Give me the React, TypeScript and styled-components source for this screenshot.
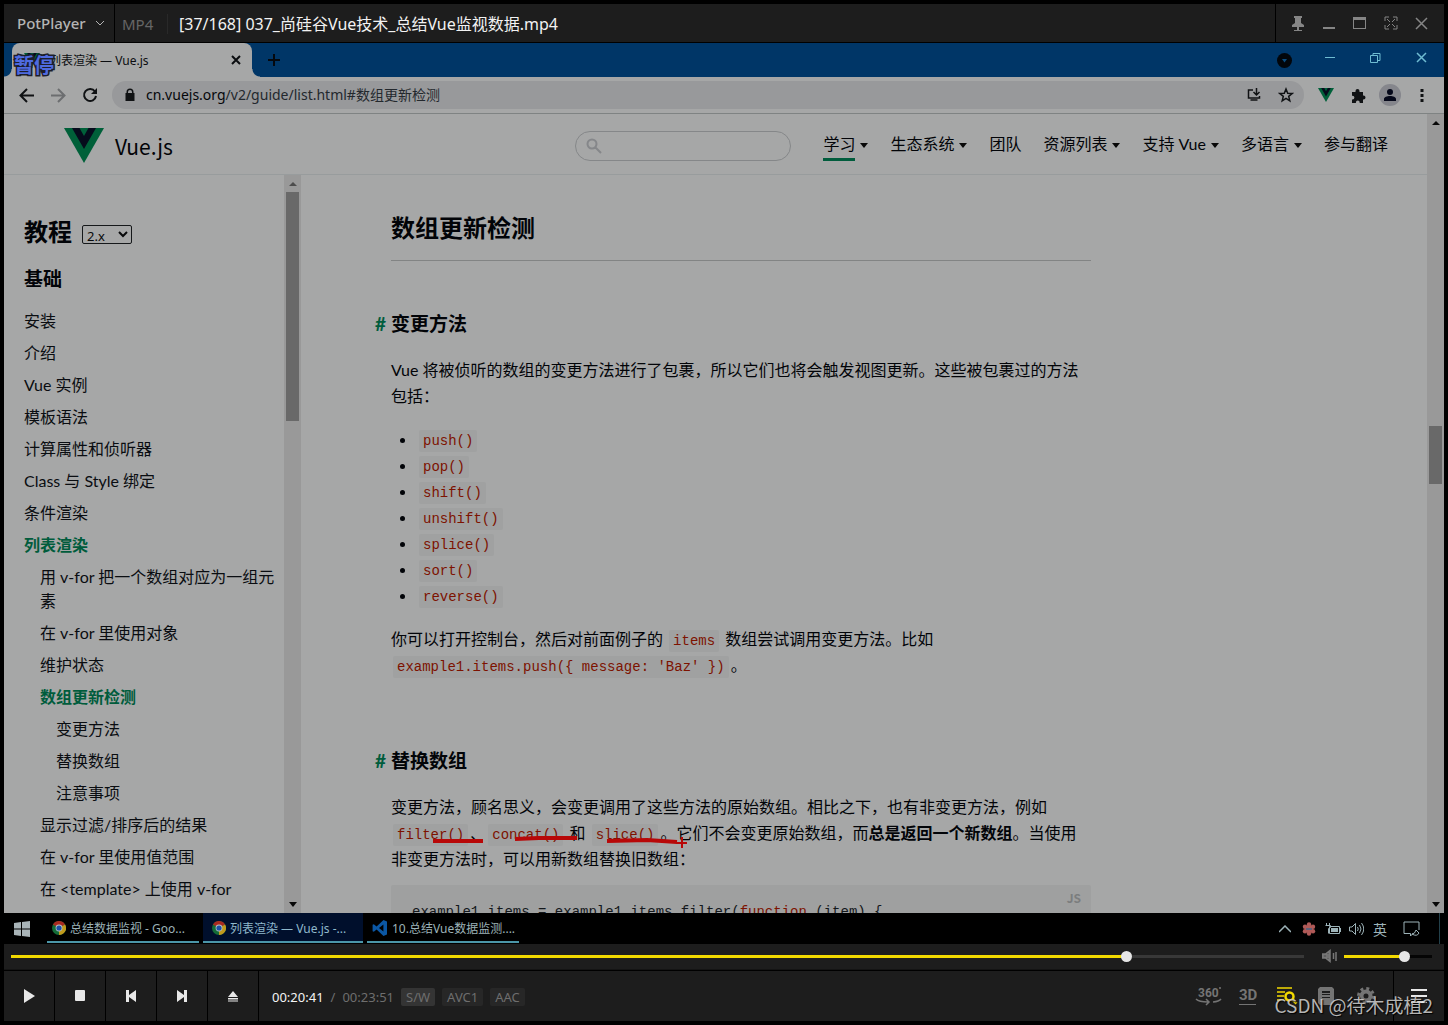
import React from "react";
import styled, { createGlobalStyle, css } from "styled-components";

const ui = `"Noto Sans", "Noto Sans CJK SC", sans-serif`;
const doc = `Lato, "Noto Sans CJK SC", sans-serif`;
const cjk = `"Noto Sans CJK SC", "Noto Sans", sans-serif`;
const mono = `"Liberation Mono", "Noto Sans CJK SC", monospace`;

const c = {
  panel: "#1d1d1d",
  page: "#a6a7a7",
  ink: "#020408",
  green: "#005c3c",
  red: "#7d1200",
  track: "#999999",
  thumb: "#696969",
  cyan: "#6fbcd2",
  yellow: "#f2d900",
};

const GlobalStyle = createGlobalStyle`
  * { box-sizing: border-box; }
  body { margin: 0; background: #000; }
  button { border: 0; padding: 0; background: none; color: inherit; font: inherit; }
  a { color: inherit; text-decoration: none; }
  svg { display: block; flex: none; }
`;

const Player = styled.div`
  height: 100vh;
  padding: 4px;
  display: flex;
  flex-direction: column;
  background: #000;
  font-family: ${ui};
`;

/* ---------- player title bar ---------- */

const TitleBar = styled.header`
  height: 38px;
  flex: none;
  display: flex;
  background: ${c.panel};
  margin-bottom: 1px;
`;

const Brand = styled.button`
  width: 111px;
  padding-left: 13px;
  display: flex;
  align-items: center;
  gap: 9px;
  border-right: 1px solid #000;
  color: #b4b4b4;
  font-size: 15px;
  font-weight: 500;
`;

const Format = styled.span`
  margin: 10px 0 8px 7px;
  width: 46px;
  border-right: 1px solid #292929;
  color: #666;
  font-size: 15px;
  line-height: 20px;
`;

const FileName = styled.span`
  flex: 1;
  padding: 2px 0 0 11px;
  align-self: center;
  color: #f2f2f2;
  font-size: 16px;
  line-height: 24px;
`;

const WindowButtons = styled.div`
  display: flex;
  align-items: center;
  padding: 0 7px 0 6px;
  border-left: 1px solid #000;
  color: #858585;
`;

const IconButton = styled.button<{ $w: number }>`
  width: ${(p) => p.$w}px;
  height: 100%;
  display: flex;
  align-items: center;
  justify-content: center;
`;

/* ---------- browser ---------- */

const Video = styled.main`
  flex: 1;
  min-height: 0;
  display: flex;
  flex-direction: column;
  position: relative;
`;

const Paused = styled.div`
  position: absolute;
  left: 10px;
  top: 8px;
  z-index: 2;
  color: #4f6be0;
  font: bold 20px/28px ${cjk};
  -webkit-text-stroke: 3px #1c1e2b;
  paint-order: stroke fill;
`;

const TabStrip = styled.div`
  height: 34px;
  flex: none;
  display: flex;
  background: #003667;
`;

const Tab = styled.div`
  margin-left: 8px;
  width: 240px;
  padding: 0 10px 0 12px;
  display: flex;
  align-items: center;
  gap: 9px;
  position: relative;
  border-radius: 8px 8px 0 0;
  background: ${c.page};
  color: #0b0d10;
  font-size: 12px;

  &::before,
  &::after {
    content: "";
    position: absolute;
    bottom: 0;
    width: 8px;
    height: 8px;
  }
  &::before {
    left: -8px;
    background: radial-gradient(circle at 0 0, transparent 7px, ${c.page} 8px);
  }
  &::after {
    right: -8px;
    background: radial-gradient(circle at 100% 0, transparent 7px, ${c.page} 8px);
  }
`;

const TabTitle = styled.span`
  flex: 1;
`;

const StripButtons = styled.div`
  margin-left: auto;
  display: flex;
  color: ${c.cyan};
`;

const Toolbar = styled.div`
  height: 37px;
  flex: none;
  padding: 0 6px;
  display: flex;
  align-items: center;
  background: ${c.page};
  border-bottom: 1px solid #7f8383;
  color: #101214;
`;

const Omnibox = styled.div`
  flex: 1;
  height: 28px;
  margin: 0 6px;
  padding: 0 7px 0 12px;
  display: flex;
  align-items: center;
  gap: 10px;
  border-radius: 14px;
  background: #98999b;
`;

const Url = styled.span`
  flex: 1;
  color: #23282d;
  font-size: 14px;
  line-height: 20px;

  b {
    color: #05070a;
    font-weight: 400;
  }
`;

const Avatar = styled.span`
  width: 22px;
  height: 22px;
  display: grid;
  place-items: center;
  border-radius: 50%;
  background: #85868c;
  color: #05081a;
`;

/* ---------- page ---------- */

const Viewport = styled.div`
  flex: 1;
  min-height: 0;
  display: flex;
  background: ${c.page};
  color: ${c.ink};
  font: 16px/24px ${doc};
`;

const Page = styled.div`
  flex: 1;
  min-width: 0;
  display: flex;
  flex-direction: column;
`;

const SiteHeader = styled.header`
  height: 61px;
  flex: none;
  padding: 3px 39px 0 60px;
  display: flex;
  align-items: center;
  border-bottom: 1px solid #989c9d;
`;

const Logo = styled.a`
  margin-right: auto;
  display: flex;
  align-items: center;
  gap: 11px;
  font: 21px/32px ${cjk};
`;

const Search = styled.label`
  width: 216px;
  height: 30px;
  margin-right: 32px;
  padding: 0 10px;
  display: flex;
  align-items: center;
  border: 1px solid #858789;
  border-radius: 15px;
  color: #85878a;

  input {
    flex: 1;
    min-width: 0;
    border: 0;
    outline: 0;
    background: none;
    font: inherit;
  }
`;

const SiteNav = styled.nav`
  display: flex;
  gap: 22px;
`;

const NavLink = styled.a<{ $current?: boolean }>`
  display: flex;
  align-items: center;
  gap: 5px;

  span {
    padding: 2px 0;
    border-bottom: 3px solid ${(p) => (p.$current ? c.green : "transparent")};
  }
`;

const Caret = styled.i<{ $up?: boolean; $dim?: boolean }>`
  width: 0;
  height: 0;
  border: 4px solid transparent;
  ${(p) =>
    p.$up
      ? css`border-top-width: 0; border-bottom-color: ${p.$dim ? "#4d4d4d" : "#080808"};`
      : css`border-bottom-width: 0; border-top: 5px solid #080808;`}
`;

const Body = styled.div`
  flex: 1;
  min-height: 0;
  display: flex;
`;

const Sidebar = styled.aside`
  width: 297px;
  flex: none;
  display: flex;
`;

const Menu = styled.nav`
  flex: 1;
  min-width: 0;
  padding: 39px 4px 0 20px;
  overflow: hidden;
`;

const MenuTitle = styled.h2`
  margin: 0 0 14px;
  display: flex;
  align-items: center;
  gap: 10px;
  font-size: 24px;
  line-height: 36px;
`;

const Version = styled.select`
  width: 50px;
  height: 19px;
  margin-top: 4px;
  padding: 0;
  border: 1px solid #15181a;
  border-radius: 2px;
  background: transparent;
  color: #08090a;
  font: 13px ${ui};
`;

const MenuGroup = styled.h3`
  margin: 0 0 15px;
  font-size: 19px;
  line-height: 30px;
`;

const MenuList = styled.ul`
  margin: 0;
  padding: 0;
  list-style: none;

  & & {
    padding-left: 16px;
  }
`;

const MenuLink = styled.a<{ $active?: boolean }>`
  display: block;
  margin-bottom: 8px;
  color: ${(p) => (p.$active ? c.green : "#0a0d11")};
  font-weight: ${(p) => (p.$active ? 700 : 400)};
`;

const Scroll = styled.div`
  width: 17px;
  flex: none;
  display: flex;
  flex-direction: column;
  align-items: stretch;
  background: ${c.track};
`;

const ScrollArrow = styled.button`
  height: 17px;
  flex: none;
  display: grid;
  place-items: center;
`;

const ScrollPart = styled.div<{ $grow: number; $thumb?: boolean }>`
  flex: ${(p) => p.$grow} 0 0;
  margin: 0 2px;
  background: ${(p) => (p.$thumb ? c.thumb : "transparent")};
`;

const ArticlePane = styled.div`
  flex: 1;
  min-width: 0;
  overflow: hidden;
  padding: 35px 40px 0 90px;
`;

const Article = styled.article`
  max-width: 700px;
`;

const H2 = styled.h2`
  margin: 0 0 51px;
  padding-bottom: 14px;
  border-bottom: 1px solid #828484;
  font-size: 24px;
  line-height: 36px;
`;

const H3 = styled.h3`
  margin: 0 0 21px -16px;
  display: flex;
  font-size: 19px;
  line-height: 24px;

  a {
    width: 16px;
    color: ${c.green};
  }
`;

const P = styled.p<{ $after: number }>`
  margin: 0 0 ${(p) => p.$after}px;
  position: relative;
  line-height: 26px;
`;

const Methods = styled.ul`
  margin: 0 0 18px;
  padding-left: 26px;
  line-height: 26px;
`;

const Code = styled.code`
  margin: 0 2px;
  padding: 3px 4px;
  border-radius: 2px;
  background: #a0a1a1;
  color: ${c.red};
  font: 14px ${mono};
  white-space: nowrap;
`;

const Marks = styled.svg`
  position: absolute;
  left: 0;
  top: 0;
  overflow: visible;
`;

const Block = styled.pre`
  margin: 0;
  padding: 14px 10px 60px 21px;
  position: relative;
  border-radius: 2px;
  background: #9fa0a0;
  color: #14181c;
  font: 14px/26px ${mono};

  em {
    color: ${c.red};
    font-style: normal;
  }
`;

const Lang = styled.span`
  position: absolute;
  right: 10px;
  top: 4px;
  color: #7b7d7e;
  font: bold 12px/18px ${cjk};
`;

/* ---------- taskbar ---------- */

const Taskbar = styled.div`
  height: 31px;
  flex: none;
  display: flex;
  align-items: stretch;
  gap: 4px;
  background: #000;
  color: #9db3b8;
  font-size: 12px;
`;

const Start = styled.button`
  width: 39px;
  padding-left: 10px;
`;

const Task = styled.button<{ $active?: boolean }>`
  width: ${(p) => (p.$active ? 160 : 152)}px;
  margin-bottom: 1px;
  padding: 2px 0 0 ${(p) => (p.$active ? 9 : 5)}px;
  display: flex;
  align-items: center;
  gap: 4px;
  border-bottom: 2px solid #4b96a8;
  background: ${(p) => (p.$active ? "#000f2c" : "transparent")};
  color: ${(p) => (p.$active ? "#8fb9cc" : "inherit")};
  white-space: nowrap;
`;

const Tray = styled.div`
  margin-left: auto;
  padding-right: 5px;
  display: flex;
  align-items: center;
`;

const TrayText = styled(IconButton)`
  font-size: 14px;
`;

const ShowDesktop = styled.button`
  width: 5px;
  border-left: 1px solid #23404a;
`;

/* ---------- player controls ---------- */

const SeekBar = styled.div`
  height: 26px;
  flex: none;
  padding: 0 12px 1px 7px;
  display: flex;
  align-items: center;
  background: ${c.panel};
  border-bottom: 1px solid #141414;
`;

const Slider = styled.input.attrs({ type: "range" })<{ $fill: number; $rest: string }>`
  appearance: none;
  height: 12px;
  margin: 0;
  background: linear-gradient(90deg, ${c.yellow} ${(p) => p.$fill}%, ${(p) => p.$rest} ${(p) => p.$fill}%)
    center / 100% 3px no-repeat;

  &::-webkit-slider-thumb {
    appearance: none;
    width: 11px;
    height: 11px;
    border-radius: 50%;
    background: #e6e6e6;
  }
`;

const Seek = styled(Slider)`
  flex: 1;
  margin-right: 18px;
`;

const Volume = styled(Slider)`
  width: 88px;
  margin-left: 7px;
`;

const Controls = styled.footer`
  height: 51px;
  flex: none;
  display: flex;
  align-items: stretch;
  border-top: 1px solid #000;
  position: relative;
  background: ${c.panel};
  color: #e8e8e8;
`;

const Transport = styled.button`
  width: 51px;
  display: grid;
  place-items: center;
  border-right: 1px solid #000;
`;

const Status = styled.div`
  flex: 1;
  padding: 2px 0 0 13px;
  display: flex;
  align-items: center;
  gap: 7px;
  color: #6e6e6e;
  font-size: 13px;
  line-height: 18px;

  time:first-child {
    color: #f4f4f4;
  }
`;

const Badge = styled.span<{ $strong?: boolean }>`
  padding: 0 5px;
  border-radius: 2px;
  background: ${(p) => (p.$strong ? "#343434" : "#272727")};
`;

const Tools = styled.div`
  padding-right: 8px;
  display: flex;
  color: #747474;
`;

const MenuButton = styled.button`
  width: 51px;
  display: grid;
  place-items: center;
  border-left: 1px solid #000;
`;

const Watermark = styled.div`
  position: absolute;
  right: 11px;
  bottom: 2px;
  color: rgba(205, 205, 205, 0.88);
  font: 19px/28px ${cjk};
  text-shadow: 1px 1px 1px #000;
`;

/* ---------- drawings ---------- */

const VueMark = ({ w }: { w: number }) => (
  <svg width={w} height={(w * 35) / 40} viewBox="0 0 40 35">
    <path d="M0 0h40L20 35z" fill="#006039" />
    <path d="M8 0h7.500l4.500 8 4.500-8H32L20 21z" fill="#060b1c" />
  </svg>
);

const ChromeMark = () => (
  <svg width="14" height="14" viewBox="0 0 14 14">
    <circle cx="7" cy="7" r="7" fill="#146c38" />
    <path d="M7 7 .9 3.500A7 7 0 0 1 13.100 3.500z" fill="#a82a20" />
    <path d="M7 7l6.100-3.500A7 7 0 0 1 7 14z" fill="#c09a1c" />
    <circle cx="7" cy="7" r="3.400" fill="#b9c2c6" />
    <circle cx="7" cy="7" r="2.600" fill="#1d50a8" />
  </svg>
);

const CodeMark = () => (
  <svg width="16" height="16" viewBox="0 0 16 16">
    <path d="M11.500 0 15 1.600v12.800L11.500 16 4.600 9.500 1.800 11.800.6 11.200V4.800l1.200-.6 2.800 2.300zM11.400 4.500 7 8l4.400 3.500z" fill="#0b57a4" fillRule="evenodd" />
  </svg>
);

type StrokeProps = { w: number; h?: number; d: string; sw?: number; color?: string };
const Stroke = ({ w, h = w, d, sw = 1, color = "currentColor" }: StrokeProps) => (
  <svg width={w} height={h} viewBox={`0 0 ${w} ${h}`} fill="none" stroke={color} strokeWidth={sw}>
    <path d={d} />
  </svg>
);
const Solid = ({ w, h = w, d }: StrokeProps) => (
  <svg width={w} height={h} viewBox={`0 0 ${w} ${h}`} fill="currentColor">
    <path d={d} fillRule="evenodd" />
  </svg>
);

const ScrollBar = ({ before, thumb, after, dimTop }: { before: number; thumb: number; after: number; dimTop?: boolean }) => (
  <Scroll>
    <ScrollArrow aria-label="向上滚动"><Caret $up $dim={dimTop} /></ScrollArrow>
    <ScrollPart $grow={before} />
    <ScrollPart $grow={thumb} $thumb />
    <ScrollPart $grow={after} />
    <ScrollArrow aria-label="向下滚动"><Caret /></ScrollArrow>
  </Scroll>
);

/* ---------- content ---------- */

type Entry = { text: string; active?: boolean; items?: Entry[] };

const menu: Entry[] = [
  { text: "安装" },
  { text: "介绍" },
  { text: "Vue 实例" },
  { text: "模板语法" },
  { text: "计算属性和侦听器" },
  { text: "Class 与 Style 绑定" },
  { text: "条件渲染" },
  {
    text: "列表渲染",
    active: true,
    items: [
      { text: "用 v-for 把一个数组对应为一组元素" },
      { text: "在 v-for 里使用对象" },
      { text: "维护状态" },
      {
        text: "数组更新检测",
        active: true,
        items: [{ text: "变更方法" }, { text: "替换数组" }, { text: "注意事项" }],
      },
      { text: "显示过滤/排序后的结果" },
      { text: "在 v-for 里使用值范围" },
      { text: "在 <template> 上使用 v-for" },
    ],
  },
];

const MenuTree = ({ items }: { items: Entry[] }) => (
  <MenuList>
    {items.map((e) => (
      <li key={e.text}>
        <MenuLink href="#" $active={e.active}>{e.text}</MenuLink>
        {e.items && <MenuTree items={e.items} />}
      </li>
    ))}
  </MenuList>
);

const nav = [
  { text: "学习", more: true, current: true },
  { text: "生态系统", more: true },
  { text: "团队" },
  { text: "资源列表", more: true },
  { text: "支持 Vue", more: true },
  { text: "多语言", more: true },
  { text: "参与翻译" },
];

const methods = ["push()", "pop()", "shift()", "unshift()", "splice()", "sort()", "reverse()"];

const transport = [
  { label: "播放", d: "M3 1v14l11-7z" },
  { label: "停止", d: "M4 2h8a1 1 0 0 1 1 1v9a1 1 0 0 1-1 1H4a1 1 0 0 1-1-1V3a1 1 0 0 1 1-1z" },
  { label: "上一个", d: "M3 2h3v5l7-5v12L6 9v5H3z" },
  { label: "下一个", d: "M13 2h-3v5L3 2v12l7-5v5h3z" },
  { label: "弹出", d: "M8 3l5 6H3zM3 10h10v1.500H3zM3 12.500h10v1H3z" },
];

export default function App() {
  const [position, setPosition] = React.useState(1239);
  const [volume, setVolume] = React.useState(72);

  return (
    <Player lang="zh-CN">
      <GlobalStyle />
      <TitleBar>
        <Brand>PotPlayer<Stroke w={10} h={6} d="M1 1l4 4 4-4" /></Brand>
        <Format>MP4</Format>
        <FileName>[37/168] 037_尚硅谷Vue技术_总结Vue监视数据.mp4</FileName>
        <WindowButtons>
          <IconButton $w={31} aria-label="置顶">
            <Solid w={14} h={15} d="M3 0h8v2h-1v5l3 2v2H8v3h3v1H3v-1h3v-3H1V9l3-2V2H3z" />
          </IconButton>
          <IconButton $w={31} aria-label="最小化"><Stroke w={12} h={14} d="M0 12h12" sw={2} /></IconButton>
          <IconButton $w={31} aria-label="最大化"><Solid w={13} h={12} d="M0 0h13v12H0zM1 3v8h11V3z" /></IconButton>
          <IconButton $w={31} aria-label="全屏">
            <Stroke w={14} d="M1 5V1h4M9 1h4v4M13 9v4H9M5 13H1V9M3 3l3 3M11 3L8 6M3 11l3-3M11 11L8 8" />
          </IconButton>
          <IconButton $w={31} aria-label="关闭"><Stroke w={13} d="M1 1l11 11M12 1L1 12" sw={1.5} /></IconButton>
        </WindowButtons>
      </TitleBar>

      <Video>
        <Paused>暂停</Paused>
        <TabStrip>
          <Tab>
            <VueMark w={16} />
            <TabTitle>列表渲染 — Vue.js</TabTitle>
            <button aria-label="关闭标签页"><Stroke w={12} h={10} d="M2 1l8 8M10 1L2 9" sw={2} /></button>
          </Tab>
          <IconButton $w={44} aria-label="新标签页"><Stroke w={12} d="M6 0v12M0 6h12" sw={2} color="#04080e" /></IconButton>
          <StripButtons>
            <IconButton $w={46} aria-label="搜索标签页">
              <svg width="15" height="15" viewBox="0 0 15 15">
                <circle cx="7.500" cy="7.500" r="7.500" fill="#02060b" />
                <path d="M5 6h5l-2.500 3.500z" fill="#0b4d80" />
              </svg>
            </IconButton>
            <IconButton $w={45} aria-label="最小化"><Stroke w={10} h={10} d="M0 2.500h10" /></IconButton>
            <IconButton $w={46} aria-label="还原">
              <Stroke w={11} h={16} d="M.5 3.500h7v7h-7zM3 3.500V1.500h7v7H8" />
            </IconButton>
            <IconButton $w={46} aria-label="关闭"><Stroke w={11} h={16} d="M1 1l9 9M10 1l-9 9" sw={1.5} /></IconButton>
          </StripButtons>
        </TabStrip>

        <Toolbar>
          <IconButton $w={32} aria-label="后退"><Stroke w={15} d="M15 7.500H2M8 1L1.500 7.500 8 14" sw={2} /></IconButton>
          <IconButton $w={32} aria-label="前进"><Stroke w={15} d="M0 7.500h13M7 1l6.500 6.500L7 14" sw={2} color="#6c6e70" /></IconButton>
          <IconButton $w={32} aria-label="刷新">
            <svg width="16" height="16" viewBox="0 0 16 16" fill="none" stroke="currentColor" strokeWidth="2">
              <path d="M13 4.500A6 6 0 1 0 14 9" />
              <path d="M15 1v6H9z" fill="currentColor" stroke="none" />
            </svg>
          </IconButton>
          <Omnibox>
            <Solid w={12} h={14} d="M2.500 5V4a3.500 3.500 0 0 1 7 0v1h1v8h-9V5zM4 5h4V4a2 2 0 0 0-4 0z" />
            <Url><b>cn.vuejs.org</b>/v2/guide/list.html#数组更新检测</Url>
            <IconButton $w={22} aria-label="安装">
              <Stroke w={14} d="M6 2H1.500v8h11V8M3.500 12h7M9.500 0v7M6.500 4l3 3 3-3" sw={1.5} />
            </IconButton>
            <IconButton $w={22} aria-label="收藏">
              <Stroke w={16} d="M8 2l1.700 4.200 4.500.3-3.500 2.900 1.100 4.400L8 11.400l-3.800 2.400 1.100-4.400-3.500-2.900 4.500-.3z" sw={1.5} />
            </IconButton>
          </Omnibox>
          <IconButton $w={32} aria-label="Vue 扩展"><VueMark w={16} /></IconButton>
          <IconButton $w={32} aria-label="扩展">
            <Solid w={15} d="M1 4h3.500V3a2 2 0 0 1 4 0v1H12v3.500h.5a2 2 0 0 1 0 4H12V15H8.700v-.5a1.900 1.900 0 0 0-3.800 0v.5H1v-3.500h.5a1.900 1.900 0 0 0 0-3.800H1z" />
          </IconButton>
          <IconButton $w={32} aria-label="用户">
            <Avatar><Solid w={12} h={12} d="M6 0a3 3 0 0 1 0 6 3 3 0 0 1 0-6zM0 12V10c0-2 3-3 6-3s6 1 6 3v2z" /></Avatar>
          </IconButton>
          <IconButton $w={32} aria-label="菜单">
            <Solid w={4} h={14} d="M.5 1h3v3h-3zM.5 6h3v3h-3zM.5 11h3v3h-3z" />
          </IconButton>
        </Toolbar>

        <Viewport>
          <Page>
            <SiteHeader>
              <Logo href="#"><VueMark w={40} />Vue.js</Logo>
              <Search>
                <Stroke w={16} d="M10.500 6a4.500 4.500 0 1 1-9 0 4.500 4.500 0 0 1 9 0zM9.500 9.500L15 15" sw={2} />
                <input type="search" aria-label="搜索" />
              </Search>
              <SiteNav>
                {nav.map((n) => (
                  <NavLink key={n.text} href="#" $current={n.current}>
                    <span>{n.text}</span>
                    {n.more && <Caret />}
                  </NavLink>
                ))}
              </SiteNav>
            </SiteHeader>
            <Body>
              <Sidebar>
                <Menu>
                  <MenuTitle>
                    教程
                    <Version aria-label="版本" defaultValue="2.x"><option>2.x</option></Version>
                  </MenuTitle>
                  <MenuGroup>基础</MenuGroup>
                  <MenuTree items={menu} />
                </Menu>
                <ScrollBar before={0} thumb={229} after={475} dimTop />
              </Sidebar>
              <ArticlePane>
                <Article>
                  <H2>数组更新检测</H2>
                  <H3><a href="#">#</a>变更方法</H3>
                  <P $after={17}>
                    Vue 将被侦听的数组的变更方法进行了包裹，所以它们也将会触发视图更新。这些被包裹过的方法包括：
                  </P>
                  <Methods>
                    {methods.map((m) => (
                      <li key={m}><Code>{m}</Code></li>
                    ))}
                  </Methods>
                  <P $after={71}>
                    你可以打开控制台，然后对前面例子的 <Code>items</Code> 数组尝试调用变更方法。比如{" "}
                    <Code>{"example1.items.push({ message: 'Baz' })"}</Code>。
                  </P>
                  <H3><a href="#">#</a>替换数组</H3>
                  <P $after={13}>
                    变更方法，顾名思义，会变更调用了这些方法的原始数组。相比之下，也有非变更方法，例如{" "}
                    <Code>filter()</Code>、<Code>concat()</Code> 和 <Code>slice()</Code>。它们不会变更原始数组，而<strong>总是返回一个新数组</strong>。当使用非变更方法时，可以用新数组替换旧数组：
                    <Marks width="300" height="52" fill="none" stroke="#b80808" strokeWidth="4">
                      <path d="M42 47h50M124 45l24-1h38M216 47l40-1 30 2" />
                      <path d="M285 49h11M291 43v11" strokeWidth="2" />
                    </Marks>
                  </P>
                  <Block>
                    <Lang>JS</Lang>
                    {"example1.items = example1.items.filter("}<em>function</em>{" (item) {"}
                  </Block>
                </Article>
              </ArticlePane>
            </Body>
          </Page>
          <ScrollBar before={295} thumb={58} after={412} />
        </Viewport>

        <Taskbar>
          <Start aria-label="开始">
            <svg width="16" height="16" viewBox="0 0 16 16" fill="#a9b4b8">
              <path d="M0 2l7-1v6.500H0zM8 1l8-1v7.500H8zM0 8.500h7V15l-7-1zM8 8.500h8V16l-8-1z" />
            </svg>
          </Start>
          <Task><ChromeMark />总结数据监视 - Goo...</Task>
          <Task $active><ChromeMark />列表渲染 — Vue.js -...</Task>
          <Task><CodeMark />10.总结Vue数据监测....</Task>
          <Tray>
            <IconButton $w={24} aria-label="显示隐藏的图标"><Stroke w={12} h={8} d="M0 7l6-6 6 6" sw={1.5} /></IconButton>
            <IconButton $w={24} aria-label="输入法">
              <svg width="14" height="14" viewBox="0 0 14 14" fill="#b05a58">
                <circle cx="7" cy="2.500" r="2.200" /><circle cx="11" cy="4.700" r="2.200" />
                <circle cx="11" cy="9.300" r="2.200" /><circle cx="7" cy="11.500" r="2.200" />
                <circle cx="3" cy="9.300" r="2.200" /><circle cx="3" cy="4.700" r="2.200" />
                <circle cx="7" cy="7" r="4" />
                <path d="M4 6h6v2H4z" fill="#5f6078" />
              </svg>
            </IconButton>
            <IconButton $w={24} aria-label="电源">
              <svg width="16" height="12" viewBox="0 0 16 12" fill="none" stroke="currentColor">
                <path d="M4.500 3.500H14.500v7H4.500zM15.500 5v4M1.500 0v2M4.500 0v2M.5 2.500h5v2l-2 1v5" />
                <path d="M6 5h7v4H6z" fill="currentColor" stroke="none" />
              </svg>
            </IconButton>
            <IconButton $w={23} aria-label="音量">
              <Stroke w={15} h={14} d="M.5 5h2.500l3.500-3.500v11L3 9H.5zM8.500 5q1.500 2 0 4M10.500 3q3 4 0 8M12.500 1q4.500 6 0 12" />
            </IconButton>
            <TrayText $w={24}>英</TrayText>
            <IconButton $w={38} aria-label="通知">
              <Stroke w={17} h={16} d="M10 12.500L7.500 15v-2.500H1V1h15v8M13 9q-1 4-4 4 5 3 7-1z" />
            </IconButton>
          </Tray>
          <ShowDesktop aria-label="显示桌面" />
        </Taskbar>
      </Video>

      <SeekBar>
        <Seek
          aria-label="进度"
          max={1431}
          value={position}
          $fill={(position / 1431) * 100}
          $rest="#383838"
          onChange={(e) => setPosition(Number(e.target.value))}
        />
        <Stroke w={15} h={14} d="M.5 5h3L8 1.500v11L3.500 9h-3zM1 6h6v2H1zM5 4v6M7 3v8M11.500 4v6M14 3v9" sw={1.5} color="#777" />
        <Volume
          aria-label="音量"
          max={100}
          value={volume}
          $fill={volume}
          $rest="#050505"
          onChange={(e) => setVolume(Number(e.target.value))}
        />
      </SeekBar>

      <Controls>
        {transport.map((t) => (
          <Transport key={t.label} aria-label={t.label}><Solid w={16} d={t.d} /></Transport>
        ))}
        <Status>
          <time>00:20:41</time>/<time>00:23:51</time>
          <Badge $strong>S/W</Badge>
          <Badge>AVC1</Badge>
          <Badge>AAC</Badge>
        </Status>
        <Tools>
          <IconButton $w={39} aria-label="360°">
            <svg width="28" height="22" viewBox="0 0 28 22" fill="none" stroke="currentColor" strokeWidth="1.500">
              <text x="3" y="12" fill="currentColor" stroke="none" fontSize="12" fontWeight="700" fontFamily="Roboto">360</text>
              <circle cx="25" cy="3" r="1" fill="currentColor" stroke="none" />
              <path d="M1 14q3 3 12 3M11 14l3 3-3 3M18 17q6-.5 8-3" />
            </svg>
          </IconButton>
          <IconButton $w={39} aria-label="3D">
            <svg width="18" height="20" viewBox="0 0 18 20" fill="currentColor">
              <text x="0" y="14" fontSize="15" fontWeight="700" fontFamily="Roboto">3D</text>
              <path d="M0 18h17v1H0z" />
            </svg>
          </IconButton>
          <IconButton $w={39} aria-label="播放列表搜索">
            <svg width="22" height="20" viewBox="0 0 22 20" fill="none" stroke={c.yellow} strokeWidth="1.500">
              <path d="M1 2h15M1 6h8M1 10h7M1 14h7" />
              <path d="M17.500 10.500a4 4 0 1 1-8 0 4 4 0 0 1 8 0zM16.500 13.500l4 4" strokeWidth="2.500" />
            </svg>
          </IconButton>
          <IconButton $w={40} aria-label="字幕">
            <Solid w={16} h={18} d="M2 0h12l2 2v14l-2 2H2l-2-2V2zM4 4v2h8V4zM4 7v1h8V7zM4 10v1h8v-1z" />
          </IconButton>
          <IconButton $w={39} aria-label="设置">
            <svg width="18" height="18" viewBox="0 0 18 18" fill="none" stroke="currentColor">
              <circle cx="9" cy="9" r="4.500" strokeWidth="4" />
              <circle cx="9" cy="9" r="7.500" strokeWidth="3" strokeDasharray="2.950 2.950" />
            </svg>
          </IconButton>
        </Tools>
        <MenuButton aria-label="菜单"><Stroke w={16} h={14} d="M0 1h16M0 7h16M0 13h16" sw={2} /></MenuButton>
        <Watermark>CSDN @待木成植2</Watermark>
      </Controls>
    </Player>
  );
}
